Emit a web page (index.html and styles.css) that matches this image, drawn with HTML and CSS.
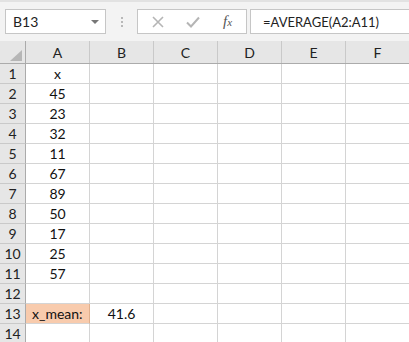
FILE: index.html
```html
<!DOCTYPE html>
<html>
<head>
<meta charset="utf-8">
<link rel="stylesheet" href="styles.css">
</head>
<body>
<div class="app">
  <div class="toolbar">
    <div class="namebox"><span class="nb-text">B13</span><span class="nb-arrow"></span></div>
    <div class="sep"><i></i><i></i><i></i></div>
    <div class="fbtns">
      <svg class="ic" width="14" height="14" viewBox="0 0 14 14"><path d="M2 2 L12 12 M12 2 L2 12" stroke="#b5b5b5" stroke-width="1.6" fill="none"/></svg>
      <svg class="ic" width="16" height="14" viewBox="0 0 16 14"><path d="M2 7.5 L6 11.5 L14 2.5" stroke="#b5b5b5" stroke-width="2" fill="none"/></svg>
      <span class="fx">f<span class="fx-x">x</span></span>
    </div>
    <div class="formula">=AVERAGE(A2:A11)</div>
  </div>
  <div class="sheet">
    <div class="corner"><span class="tri"></span></div>
    <div class="ch">A</div><div class="ch">B</div><div class="ch">C</div><div class="ch">D</div><div class="ch">E</div><div class="ch">F</div>
  </div>
  <div class="grid">
    <div class="rh">1</div><div class="c">x</div><div class="c"></div><div class="c"></div><div class="c"></div><div class="c"></div><div class="c"></div>
    <div class="rh">2</div><div class="c">45</div><div class="c"></div><div class="c"></div><div class="c"></div><div class="c"></div><div class="c"></div>
    <div class="rh">3</div><div class="c">23</div><div class="c"></div><div class="c"></div><div class="c"></div><div class="c"></div><div class="c"></div>
    <div class="rh">4</div><div class="c">32</div><div class="c"></div><div class="c"></div><div class="c"></div><div class="c"></div><div class="c"></div>
    <div class="rh">5</div><div class="c">11</div><div class="c"></div><div class="c"></div><div class="c"></div><div class="c"></div><div class="c"></div>
    <div class="rh">6</div><div class="c">67</div><div class="c"></div><div class="c"></div><div class="c"></div><div class="c"></div><div class="c"></div>
    <div class="rh">7</div><div class="c">89</div><div class="c"></div><div class="c"></div><div class="c"></div><div class="c"></div><div class="c"></div>
    <div class="rh">8</div><div class="c">50</div><div class="c"></div><div class="c"></div><div class="c"></div><div class="c"></div><div class="c"></div>
    <div class="rh">9</div><div class="c">17</div><div class="c"></div><div class="c"></div><div class="c"></div><div class="c"></div><div class="c"></div>
    <div class="rh">10</div><div class="c">25</div><div class="c"></div><div class="c"></div><div class="c"></div><div class="c"></div><div class="c"></div>
    <div class="rh">11</div><div class="c">57</div><div class="c"></div><div class="c"></div><div class="c"></div><div class="c"></div><div class="c"></div>
    <div class="rh">12</div><div class="c"></div><div class="c"></div><div class="c"></div><div class="c"></div><div class="c"></div><div class="c"></div>
    <div class="rh">13</div><div class="c lbl">x_mean:</div><div class="c">41.6</div><div class="c"></div><div class="c"></div><div class="c"></div><div class="c"></div>
    <div class="rh">14</div><div class="c"></div><div class="c"></div><div class="c"></div><div class="c"></div><div class="c"></div><div class="c"></div>
  </div>
</div>
</body>
</html>
```
FILE: styles.css
```css
html, body { margin: 0; padding: 0; }
body { width: 409px; height: 342px; overflow: hidden; background: #fff; font-family: Lato, "Liberation Sans", Arial, sans-serif; color: #222; }
.app { width: 409px; height: 342px; overflow: hidden; }
.toolbar { height: 41px; background: #f3f3f3; border-top: 2px solid #e2e2e2; box-sizing: border-box; display: flex; align-items: flex-start; padding-top: 7px; padding-left: 5px; }
.namebox { width: 101px; height: 25px; box-sizing: border-box; background: #fff; border: 1px solid #c6c6c6; display: flex; align-items: center; justify-content: space-between; padding: 0 6px 0 7px; }
.nb-text { font-size: 14px; color: #222; }
.nb-arrow { width: 0; height: 0; border-left: 4px solid transparent; border-right: 4px solid transparent; border-top: 4px solid #777; margin-top: 1px; }
.sep { width: 31px; height: 25px; display: flex; flex-direction: column; align-items: center; justify-content: center; gap: 2px; }
.sep i { display: block; width: 2px; height: 2px; background: #b8b8b8; }
.fbtns { width: 110px; height: 25px; box-sizing: border-box; background: #fff; border: 1px solid #c6c6c6; display: flex; align-items: center; padding-left: 13px; gap: 20px; }
.fx { font-family: "Liberation Serif", serif; font-style: italic; font-size: 15px; color: #555; margin-left: 2px; }
.fx-x { font-size: 11px; }
.formula { margin-left: 3px; flex: 1; height: 25px; box-sizing: border-box; background: #fff; border: 1px solid #c6c6c6; border-right: none; font-size: 13px; color: #222; display: flex; align-items: center; padding-left: 12px; }
.sheet { display: grid; grid-template-columns: 26px repeat(6, 64px); height: 22px; background: #e6e6e6; border-bottom: 1px solid #ababab; }
.corner { position: relative; border-right: 1px solid #ababab; }
.tri { position: absolute; right: 3px; bottom: 2px; width: 0; height: 0; border-left: 12px solid transparent; border-bottom: 11px solid #b6b6b6; }
.ch { display: flex; align-items: center; justify-content: center; font-size: 14px; color: #222; border-right: 1px solid #c9c9c9; padding-top: 1px; }
.grid { display: grid; grid-template-columns: 26px repeat(6, 64px); grid-auto-rows: 20px; }
.rh { background: #e6e6e6; border-right: 1px solid #ababab; border-bottom: 1px solid #c9c9c9; font-size: 14px; display: flex; align-items: center; justify-content: center; color: #222; }
.c { border-right: 1px solid #d4d4d4; border-bottom: 1px solid #d4d4d4; font-size: 14px; display: flex; align-items: center; justify-content: center; color: #111; }
.c.lbl { background: #f8cbad; justify-content: flex-start; padding-left: 6px; border-right-color: #e0b08e; }
```
